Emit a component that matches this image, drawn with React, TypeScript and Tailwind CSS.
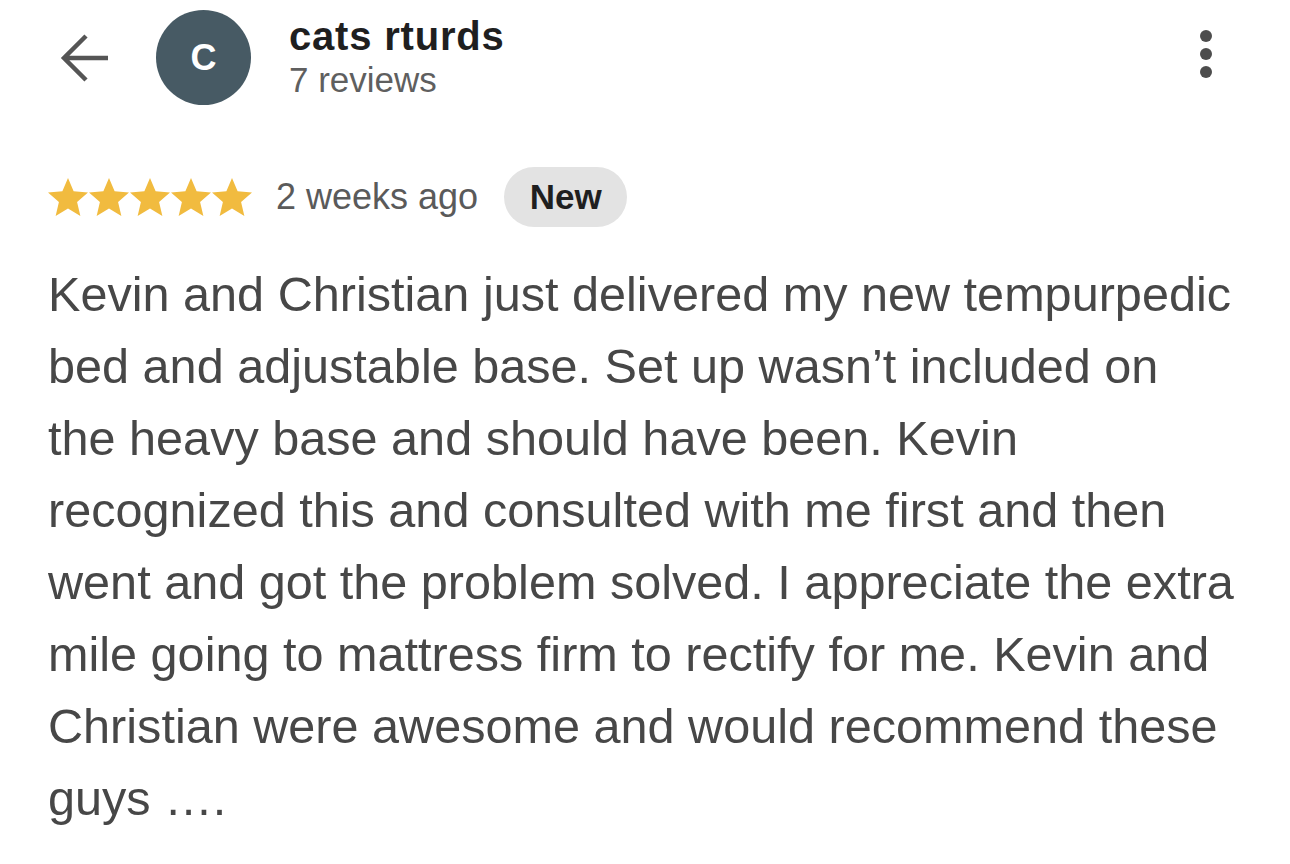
import React from "react";

const lines = [
  "Kevin and Christian just delivered my new tempurpedic",
  "bed and adjustable base. Set up wasn\u2019t included on",
  "the heavy base and should have been. Kevin",
  "recognized this and consulted with me first and then",
  "went and got the problem solved. I appreciate the extra",
  "mile going to mattress firm to rectify for me. Kevin and",
  "Christian were awesome and would recommend these",
  "guys \u2026.",
];

function Star() {
  return (
    <svg width="40" height="38" viewBox="2 2 20 19" className="shrink-0">
      <path
        d="M12 17.27L18.18 21l-1.64-7.03L22 9.24l-7.19-.61L12 2 9.19 8.63 2 9.24l5.46 4.73L5.82 21z"
        fill="#f1bb3f"
      />
    </svg>
  );
}

export default function App() {
  return (
    <div className="w-[1290px] h-[864px] bg-white overflow-hidden font-['Liberation_Sans',Arial,sans-serif]">
      <div className="flex items-center pt-[10px] pl-[60px] pr-[78px]">
        <svg width="50" height="50" viewBox="0 0 50 50" className="shrink-0">
          <path
            d="M48 25H4M26 3L4 25l22 22"
            fill="none"
            stroke="#555555"
            strokeWidth="4.5"
          />
        </svg>
        <div className="ml-[46px] w-[95px] h-[95px] rounded-full bg-[#475a64] flex items-center justify-center shrink-0">
          <span className="text-white font-bold text-[36px] leading-none">C</span>
        </div>
        <div className="ml-[38px] flex flex-col">
          <span className="text-[40px] leading-[46px] font-bold text-[#1f1f1f] tracking-[0.8px] -mt-[2px]">
            cats rturds
          </span>
          <span className="text-[35px] leading-[42px] text-[#5f5f5f]">
            7 reviews
          </span>
        </div>
        <div className="ml-auto flex flex-col gap-[6px] -mt-[8px]">
          <span className="w-[12px] h-[12px] rounded-full bg-[#4d4d4d]" />
          <span className="w-[12px] h-[12px] rounded-full bg-[#4d4d4d]" />
          <span className="w-[12px] h-[12px] rounded-full bg-[#4d4d4d]" />
        </div>
      </div>

      <div className="flex items-center pl-[48px] mt-[62px]">
        <div className="flex gap-[1px]">
          <Star />
          <Star />
          <Star />
          <Star />
          <Star />
        </div>
        <span className="ml-[24px] text-[36px] text-[#5a5a5a]">2 weeks ago</span>
        <span className="ml-[26px] h-[60px] w-[123px] rounded-full bg-[#e3e3e3] flex items-center justify-center text-[35px] font-bold text-[#1f1f1f]">
          New
        </span>
      </div>

      <div className="pl-[48px] mt-[31px] text-[48.6px] leading-[72px] text-[#474747]">
        {lines.map((l, i) => (
          <div key={i} className="whitespace-nowrap">
            {l}
          </div>
        ))}
      </div>
    </div>
  );
}
